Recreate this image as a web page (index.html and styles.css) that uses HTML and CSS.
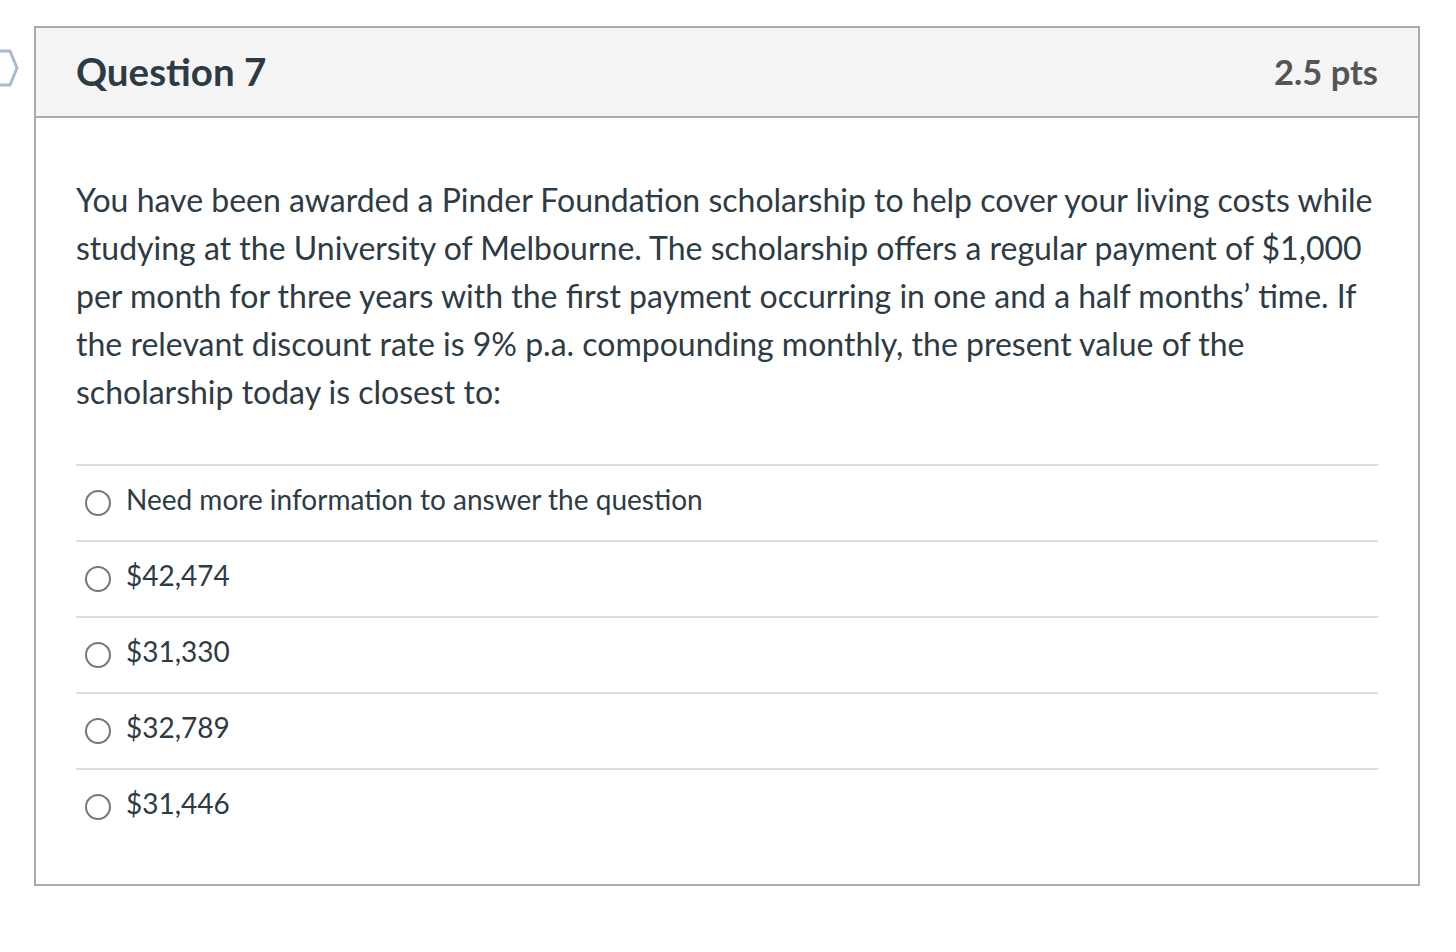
FILE: index.html
```html
<!DOCTYPE html>
<html lang="en">
<head>
<meta charset="utf-8">
<title>Question 7</title>
<link rel="stylesheet" href="styles.css">
</head>
<body>
<div class="page">
  <svg class="flag" width="20" height="38" viewBox="0 0 20 38" aria-hidden="true">
    <path d="M-6 2 H10 L17 19 L10 36 H-6" fill="none" stroke="#a7bace" stroke-width="3" stroke-linejoin="round"/>
  </svg>
  <div class="question">
    <div class="q-header">
      <h2 class="q-title">Question 7</h2>
      <span class="q-points">2.5 pts</span>
    </div>
    <div class="q-body">
      <p class="q-text">You have been awarded a Pinder Foundation scholarship to help cover your living costs while studying at the University of Melbourne. The scholarship offers a regular payment of $1,000 per month for three years with the first payment occurring in one and a half months’ time. If the relevant discount rate is 9% p.a. compounding monthly, the present value of the scholarship today is closest to:</p>
      <div class="answers">
        <label class="answer"><span class="radio"></span><span class="a-text">Need more information to answer the question</span></label>
        <label class="answer"><span class="radio"></span><span class="a-text">$42,474</span></label>
        <label class="answer"><span class="radio"></span><span class="a-text">$31,330</span></label>
        <label class="answer"><span class="radio"></span><span class="a-text">$32,789</span></label>
        <label class="answer"><span class="radio"></span><span class="a-text">$31,446</span></label>
      </div>
    </div>
  </div>
</div>
</body>
</html>
```

FILE: styles.css
```css
html, body {
  margin: 0;
  padding: 0;
  background: #ffffff;
}

body {
  font-family: Lato, "Noto Sans", sans-serif;
  color: #2d3b45;
}

.page {
  position: relative;
  padding: 26px 0 0 34px;
  width: 1386px;
}

.flag {
  position: absolute;
  left: 0;
  top: 49px;
}

.question {
  border: 2px solid #aaaaaa;
  box-sizing: border-box;
  width: 1386px;
}

.q-header {
  height: 88px;
  background: #f5f5f5;
  border-bottom: 2px solid #aaaaaa;
  display: flex;
  align-items: center;
  justify-content: space-between;
  padding: 0 40px 2px 40px;
  box-sizing: border-box;
  height: 90px;
}

.q-title {
  margin: 0;
  font-size: 38.5px;
  font-weight: 700;
  color: #2d3b45;
}

.q-points {
  font-size: 34.5px;
  font-weight: 700;
  color: #555555;
}

.q-body {
  padding: 58px 40px 40px 40px;
}

.q-text {
  margin: 0 0 48px 0;
  font-size: 32px;
  line-height: 48px;
}

.answers {
  display: flex;
  flex-direction: column;
}

.answer {
  height: 74px;
  box-sizing: content-box;
  border-top: 2px solid #dddddd;
  display: flex;
  align-items: center;
  gap: 15px;
  padding-left: 9px;
  font-size: 28px;
}

.a-text {
  margin-bottom: 9px;
}

.radio {
  width: 26px;
  height: 26px;
  box-sizing: border-box;
  border: 2px solid #777777;
  border-radius: 50%;
  flex: none;
}
```
